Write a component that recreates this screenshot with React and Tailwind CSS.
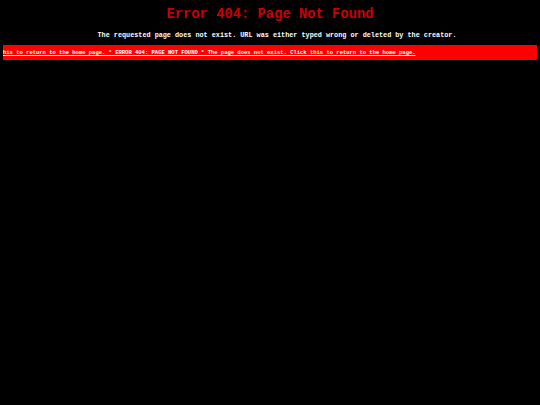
export default function App() {
  return (
    <div className="min-h-[405px] bg-black text-white font-['Liberation_Mono','DejaVu_Sans_Mono',monospace]">
      <h1 className="pt-[6px] text-center text-[13.8px] leading-[18px] font-bold text-[#cc0000]">
        Error 404: Page Not Found
      </h1>
      <p className="mt-[6px] pl-[14px] text-center text-[6.8px] leading-[10px] font-bold">
        The requested page does not exist. URL was either typed wrong or deleted by the creator.
      </p>
      <a
        href="#"
        className="mx-[3px] mt-[5px] flex h-[15px] items-center overflow-hidden whitespace-nowrap bg-[#ff0000] pt-[2px] text-[5.5px] font-bold text-white underline"
      >
        his to return to the home page. * ERROR 404: PAGE NOT FOUND * The page does not exist. Click this to return to the home page.
      </a>
    </div>
  );
}
